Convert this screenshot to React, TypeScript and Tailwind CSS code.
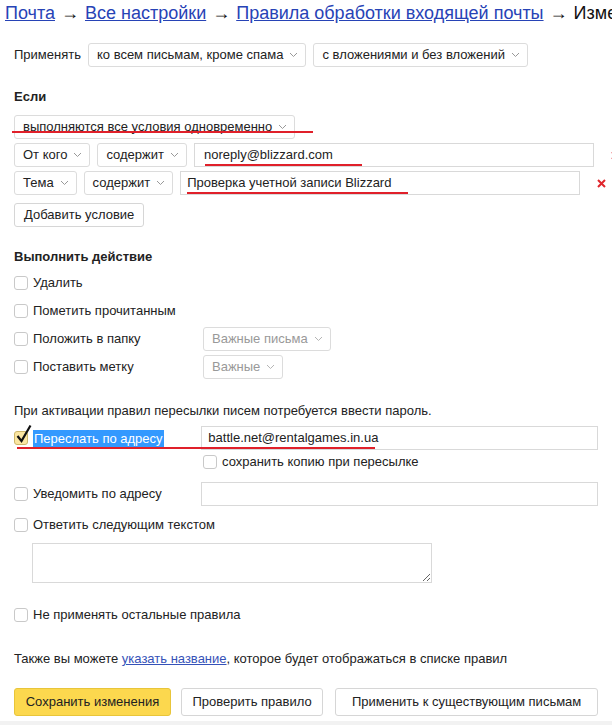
import type { ReactNode } from "react"

function Chevron({ muted }: { muted?: boolean }) {
    return (
        <svg width="9" height="6" viewBox="0 0 9 6" className={muted ? "text-[#b5b5b5]" : "text-[#999]"}>
            <polyline points="1,1 4.5,4.5 8,1" fill="none" stroke="currentColor" strokeWidth="1" />
        </svg>
    )
}

function Select({ children, muted }: { children: ReactNode; muted?: boolean }) {
    return (
        <div
            className={`inline-flex h-[24px] shrink-0 items-center gap-[6px] rounded-[3px] border border-[#dcdcdc] bg-white pl-[8px] pr-[7px] ${
                muted ? "text-[#999]" : "text-[#222]"
            }`}
        >
            <span className="whitespace-nowrap">{children}</span>
            <Chevron muted={muted} />
        </div>
    )
}

function Box() {
    return <span className="h-[14px] w-[14px] shrink-0 rounded-[3px] border border-[#c9c9c9] bg-white" />
}

function Check({ label, children }: { label: string; children?: ReactNode }) {
    return (
        <div className="flex h-[24px] items-center">
            <div className="flex w-[189px] items-center gap-[5px]">
                <Box />
                <span className="whitespace-nowrap">{label}</span>
            </div>
            {children}
        </div>
    )
}

function Cross() {
    return (
        <svg width="9" height="9" viewBox="0 0 9 9" className="ml-[10px] shrink-0">
            <path d="M1 1 L8 8 M8 1 L1 8" stroke="#e0262c" strokeWidth="2" />
        </svg>
    )
}

function Button({ children, yellow, width }: { children: ReactNode; yellow?: boolean; width: string }) {
    return (
        <button
            className={`h-[28px] rounded-[3px] border text-[13px] whitespace-nowrap ${width} ${
                yellow ? "border-[#e8c53a] bg-[#fcd84e] text-[#222]" : "border-[#d6d6d6] bg-white text-[#222]"
            }`}
        >
            {children}
        </button>
    )
}

export default function App() {
    return (
        <div className="relative h-[725px] w-[612px] overflow-hidden bg-white font-['Liberation_Sans',Arial,sans-serif] text-[13px] text-[#222]">
            {/* breadcrumb */}
            <div className="flex h-[26px] items-center whitespace-nowrap pl-[5px] text-[18px] text-[#111]">
                <a className="text-[#2743b6] underline">Почта</a>
                <span className="mx-[6px]">→</span>
                <a className="text-[#2743b6] underline">Все настройки</a>
                <span className="mx-[6px]">→</span>
                <a className="text-[#2743b6] underline">Правила обработки входящей почты</a>
                <span className="mx-[6px]">→</span>
                <span>Изменение правила</span>
            </div>

            <div className="px-[14px]">
                <div className="mt-[17px] flex items-center gap-[7px]">
                    <span>Применять</span>
                    <Select>ко всем письмам, кроме спама</Select>
                    <Select>с вложениями и без вложений</Select>
                </div>

                <div className="mt-[22px] h-[16px] font-bold leading-[16px]">Если</div>

                <div className="mt-[10px] flex flex-col gap-[4px]">
                    <div>
                        <Select>выполняются все условия одновременно</Select>
                    </div>
                    <div className="flex items-center gap-[7px] whitespace-nowrap">
                        <Select>От кого</Select>
                        <Select>содержит</Select>
                        <div className="flex h-[24px] w-[400px] shrink-0 items-center border border-[#d9d9d9] px-[9px]">
                            noreply@blizzard.com
                        </div>
                        <Cross />
                    </div>
                    <div className="flex items-center gap-[7px]">
                        <Select>Тема</Select>
                        <Select>содержит</Select>
                        <div className="flex h-[24px] w-[400px] shrink-0 items-center border border-[#d9d9d9] px-[6px]">
                            Проверка учетной записи Blizzard
                        </div>
                        <Cross />
                    </div>
                </div>

                <div className="mt-[8px]">
                    <button className="h-[24px] rounded-[3px] border border-[#d6d6d6] bg-white px-[9px] whitespace-nowrap">
                        Добавить условие
                    </button>
                </div>

                <div className="mt-[22px] h-[16px] font-bold leading-[16px]">Выполнить действие</div>

                <div className="mt-[6px] flex flex-col gap-[4px]">
                    <Check label="Удалить" />
                    <Check label="Пометить прочитанным" />
                    <Check label="Положить в папку">
                        <Select muted>Важные письма</Select>
                    </Check>
                    <Check label="Поставить метку">
                        <Select muted>Важные</Select>
                    </Check>
                </div>

                <div className="mt-[24px] h-[16px] leading-[16px]">При активации правил пересылки писем потребуется ввести пароль.</div>

                <div className="mt-[7px] flex h-[24px] items-center">
                    <div className="flex w-[189px] items-center gap-[5px]">
                        <span className="relative h-[14px] w-[14px] shrink-0 rounded-[3px] border border-[#cdb66a] bg-[#fbe6a2]">
                            <svg width="16" height="20" viewBox="0 0 16 20" className="absolute left-[1px] top-[-8px]">
                                <path d="M1.5 12 L5.5 17 L14.5 1.5" fill="none" stroke="#111" strokeWidth="2.2" />
                            </svg>
                        </span>
                        <span className="bg-[#3399ff] px-[1px] leading-[17px] whitespace-nowrap text-white">Переслать по адресу</span>
                    </div>
                    <div className="flex h-[24px] w-[400px] items-center border border-[#d9d9d9] px-[6px]">
                        battle.net@rentalgames.in.ua
                    </div>
                </div>
                <div className="mt-[4px] flex h-[16px] items-center gap-[5px] pl-[189px]">
                    <Box />
                    <span>сохранить копию при пересылке</span>
                </div>

                <div className="mt-[12px]">
                    <Check label="Уведомить по адресу">
                        <div className="h-[24px] w-[400px] border border-[#d9d9d9]" />
                    </Check>
                </div>
                <div className="mt-[7px]">
                    <Check label="Ответить следующим текстом" />
                </div>
                <textarea className="mt-[6px] ml-[18px] block h-[40px] w-[400px] border border-[#d9d9d9] outline-none" />

                <div className="mt-[20px]">
                    <Check label="Не применять остальные правила" />
                </div>

                <div className="mt-[24px] h-[16px] leading-[16px]">
                    Также вы можете <a className="text-[#3552b8] underline">указать название</a>, которое будет отображаться в списке правил
                </div>

                <div className="mt-[21px] flex gap-[10px]">
                    <Button yellow width="w-[160px]">Сохранить изменения</Button>
                    <Button width="w-[145px]">Проверить правило</Button>
                    <Button width="w-[268px] ml-[2px]">Применить к существующим письмам</Button>
                </div>
            </div>
            <div className="absolute bottom-0 left-0 h-[4px] w-full bg-[#f2f2f2]" />

            {/* red annotation lines */}
            <div className="absolute left-[12px] top-[131px] h-[2px] w-[301px] bg-[#e0202a]" />
            <div className="absolute left-[205px] top-[164px] h-[2px] w-[157px] bg-[#e0202a]" />
            <div className="absolute left-[187px] top-[192px] h-[2px] w-[221px] bg-[#e0202a]" />
            <div className="absolute left-[17px] top-[447px] h-[2px] w-[358px] bg-[#e0202a]" />
        </div>
    )
}
